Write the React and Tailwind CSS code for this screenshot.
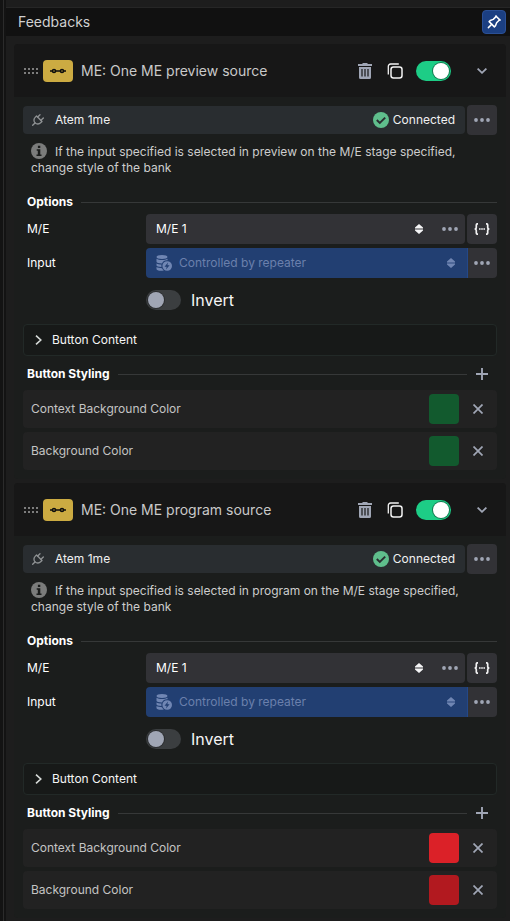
import { useState } from "react";
import { TbPin, TbPlug } from "react-icons/tb";

function DragHandle() {
  return (
    <svg className="h-[6px] w-[15px] shrink-0" viewBox="0 0 15 6" fill="#7d7d7d" aria-hidden="true">
      {[0, 4, 8, 12].map((x) => (
        <g key={x}>
          <rect x={x} y="0" width="2" height="2" />
          <rect x={x} y="4" width="2" height="2" />
        </g>
      ))}
    </svg>
  );
}

function LinkIcon() {
  return (
    <svg className="h-[6px] w-4" viewBox="0 0 16 6" fill="none" stroke="#0d0d0d" strokeWidth="1.6" aria-hidden="true">
      <path d="M0 3h2.500M5.500 3h5M13.500 3H16" />
      <circle cx="4" cy="3" r="1.5" />
      <circle cx="12" cy="3" r="1.5" />
    </svg>
  );
}

function TrashIcon() {
  return (
    <svg className="h-4 w-[14px]" viewBox="0 0 14 16" aria-hidden="true">
      <path fill="#a0a6b5" d="M5 0h4l1 1h4v2H0V1h4zM1 4h12v10.5a1.5 1.5 0 0 1-1.5 1.5h-9A1.5 1.5 0 0 1 1 14.500z" />
      <path stroke="#171717" d="M4 6v7.500M7 6v7.500M10 6v7.500" strokeWidth="1.2" />
    </svg>
  );
}

function CopyIcon() {
  return (
    <svg className="h-4 w-4" viewBox="0 0 16 16" fill="none" stroke="#f4f4f4" strokeWidth="1.5" aria-hidden="true">
      <rect x="4" y="4" width="11" height="11" rx="2.500" />
      <path d="M1.300 11.500V3.300a2.300 2.300 0 0 1 2.300-2.300h8.200" strokeWidth="1.300" />
    </svg>
  );
}

function ChevronDown() {
  return (
    <svg className="h-[6px] w-[10px]" viewBox="0 0 10 6" fill="none" stroke="#a0a6b5" strokeWidth="1.800" aria-hidden="true">
      <path d="M.6.6 5 4.800 9.400.6" />
    </svg>
  );
}

function ChevronRight() {
  return (
    <svg className="h-[10px] w-[7px]" viewBox="0 0 7 10" fill="none" stroke="#d6dad8" strokeWidth="1.600" aria-hidden="true">
      <path d="M1 .6 5.800 5 1 9.400" />
    </svg>
  );
}

function DotsIcon() {
  return (
    <svg className="h-1 w-4" viewBox="0 0 16 4" fill="#a0a6b5" aria-hidden="true">
      <circle cx="2" cy="2" r="1.900" />
      <circle cx="8" cy="2" r="1.900" />
      <circle cx="14" cy="2" r="1.900" />
    </svg>
  );
}

function SortIcon({ dim }) {
  return (
    <svg className="pointer-events-none h-[10px] w-2" viewBox="0 0 8 10" aria-hidden="true">
      <path fill={dim ? "#7086b3" : "#f5f5f6"} d="M4 0 8 3.500V4.400H0V3.500zM4 10 0 6.500V5.600h8v.9z" />
      <path fill={dim ? "#546c9d" : "#98989c"} d="M0 4.400h8v1.200H0z" />
    </svg>
  );
}

function BracesIcon() {
  return (
    <svg className="h-3 w-4" viewBox="0 0 16 12" fill="none" stroke="#f2f2f3" strokeWidth="1.700" aria-hidden="true">
      <path d="M4 .8H3.400C2.600.8 2.300 1.200 2.300 2v2.200C2.300 5.300 1.700 6 .6 6c1.100 0 1.700.7 1.700 1.800V10c0 .8.3 1.200 1.100 1.200H4M12 .8h.6c.8 0 1.100.4 1.100 1.200v2.200c0 1.100.6 1.800 1.700 1.800-1.100 0-1.700.7-1.700 1.800V10c0 .8-.3 1.200-1.100 1.200H12" />
      <path d="M5 6h1.600M7.200 6h1.600M9.400 6H11" strokeWidth="1.300" />
    </svg>
  );
}

function RepeaterIcon() {
  return (
    <svg className="h-4 w-4" viewBox="0 0 16 16" fill="#7086b3" aria-hidden="true">
      <path d="M6 0c3.300 0 5.500.9 5.500 2S9.300 4 6 4 .5 3.100.5 2 2.700 0 6 0zM.5 3.800C1.700 4.700 3.800 5 6 5s4.300-.3 5.500-1.200v1.400A5.500 5.500 0 0 0 6 8.500C3 8.500.5 7.800.5 6.800zM.5 8.500c1.100.8 3 1.100 5 1.100-.2.900-.2 1.600 0 2.400-3-.1-5-.9-5-1.800zM.5 12.100c1.200.8 3.100 1.100 5.500 1.100.4 1 1 1.700 1.800 2.300C4 16.300.5 15.500.5 14z" />
      <path fillRule="evenodd" d="M11.200 6.200a4.800 4.800 0 1 1 0 9.600 4.800 4.800 0 0 1 0-9.600zm.8 1.300-3.500 4.200h2.200l-.7 2.800 3.600-4.200h-2.200z" />
    </svg>
  );
}

function InfoIcon() {
  return (
    <svg className="mr-2 inline-block h-4 w-4 align-[-3px]" viewBox="0 0 16 16" aria-hidden="true">
      <circle cx="8" cy="8" r="8" fill="#7b7c7b" />
      <path fill="#1b1d1c" d="M6.900 2.800h2.400v2.200H6.900zM5.700 6.200h3.600v5.200h1.200v1.600h-5v-1.600h1.300V7.700H5.700z" />
    </svg>
  );
}

function CheckIcon() {
  return (
    <svg className="h-4 w-4" viewBox="0 0 16 16" aria-hidden="true">
      <circle cx="8" cy="8" r="8" fill="#5fbe8c" />
      <path d="m3.800 8 3 3 5.400-5.400" fill="none" stroke="#292d30" strokeWidth="1.900" />
    </svg>
  );
}

function PlusIcon() {
  return (
    <svg className="h-3 w-3" viewBox="0 0 12 12" stroke="#a0a6b5" strokeWidth="1.900" aria-hidden="true">
      <path d="M6 0v12M0 6h12" />
    </svg>
  );
}

function CloseIcon() {
  return (
    <svg className="h-[10px] w-[10px]" viewBox="0 0 10 10" stroke="#a0a6b5" strokeWidth="1.700" aria-hidden="true">
      <path d="m.5.5 9 9M9.500.5l-9 9" />
    </svg>
  );
}

function IconButton({ label, className = "", children }) {
  return (
    <button type="button" aria-label={label} className={`flex shrink-0 items-center justify-center ${className}`}>
      {children}
    </button>
  );
}

function Toggle({ id, label, checked, onChange }) {
  return (
    <input
      id={id}
      type="checkbox"
      role="switch"
      aria-label={label}
      checked={checked}
      onChange={(e) => onChange(e.target.checked)}
      className="flex h-5 w-[35px] shrink-0 cursor-pointer appearance-none items-center rounded-full bg-[#3b3e40] px-[2px] before:h-4 before:w-4 before:rounded-full before:bg-[#a0a6b5] before:ring-1 before:ring-[#2b2d2f] checked:justify-end checked:bg-[#1dcd86] checked:before:ring-[#137a50] checked:before:bg-white"
    />
  );
}

function ColorRow({ name, color }) {
  return (
    <div className="flex h-[38px] items-center rounded bg-[#222222] pl-2 pr-3">
      <span className="flex-1 text-[#c4c4c4]">{name}</span>
      <button type="button" aria-label={`${name} swatch`} className={`h-[30px] w-[30px] rounded ${color}`} />
      <IconButton label={`Remove ${name}`} className="ml-3 h-6 w-[14px]">
        <CloseIcon />
      </IconButton>
    </div>
  );
}

function FeedbackCard({ id, title, target, contextColor, color }) {
  const [enabled, setEnabled] = useState(true);
  const [inverted, setInverted] = useState(false);

  return (
    <section className="rounded bg-[#1b1d1c]">
      <header className="flex h-[53px] items-center rounded-t bg-[#171717] pl-[10px] pr-[19px]">
        <DragHandle />
        <span className="ml-1 flex h-[22px] w-[30px] shrink-0 items-center justify-center rounded bg-[#ccab42]">
          <LinkIcon />
        </span>
        <h2 className="ml-2 min-w-0 flex-1 truncate text-sm text-[#c9c9c9]">{title}</h2>
        <IconButton label="Delete feedback">
          <TrashIcon />
        </IconButton>
        <IconButton label="Duplicate feedback" className="ml-[15px]">
          <CopyIcon />
        </IconButton>
        <div className="ml-[13px] mr-[26px] flex">
          <Toggle id={`${id}-enabled`} label="Enabled" checked={enabled} onChange={setEnabled} />
        </div>
        <IconButton label="Collapse feedback">
          <ChevronDown />
        </IconButton>
      </header>

      <div className="px-[9px] pb-[9px] pt-2">
        <div className="flex items-center gap-[2px]">
          <div className="flex h-7 flex-1 items-center rounded bg-[#292d30] pl-[7px] pr-[10px] text-[#f0f0f0]">
            <TbPlug className="h-4 w-4 shrink-0 text-[#8f9294]" />
            <span className="ml-[9px] flex-1">Atem 1me</span>
            <CheckIcon />
            <span className="ml-1">Connected</span>
          </div>
          <IconButton label="Connection menu" className="h-[30px] w-[30px] rounded bg-[#323236]">
            <DotsIcon />
          </IconButton>
        </div>

        <p className="mt-2 px-2 text-[#cdcdcd]">
          <InfoIcon />
          {`If the input specified is selected in ${target} on the M/E stage specified, change style of the bank`}
        </p>

        <div className="mt-[18px] flex items-center gap-2 pl-1">
          <h3 className="font-bold text-white">Options</h3>
          <span className="h-px flex-1 bg-[#363838]" />
        </div>

        <div className="mt-1 flex items-center text-white">
          <label htmlFor={`${id}-me`} className="w-[123px] shrink-0 pl-1">M/E</label>
          <div className="flex min-w-0 flex-1 gap-[2px]">
            <div className="flex h-[30px] min-w-0 flex-1 items-center rounded bg-[#323236] pr-[7px]">
              <div className="grid h-full flex-1 items-center">
                <select id={`${id}-me`} defaultValue="1" className="col-start-1 row-start-1 h-full w-full appearance-none rounded bg-transparent px-[10px]">
                  <option value="1">M/E 1</option>
                </select>
                <span className="pointer-events-none col-start-1 row-start-1 justify-self-end">
                  <SortIcon />
                </span>
              </div>
              <IconButton label="M/E menu" className="ml-[19px] h-full">
                <DotsIcon />
              </IconButton>
            </div>
            <IconButton label="M/E expression" className="h-[30px] w-[30px] rounded bg-[#323236]">
              <BracesIcon />
            </IconButton>
          </div>
        </div>

        <div className="mt-1 flex items-center text-white">
          <label htmlFor={`${id}-input`} className="w-[123px] shrink-0 pl-1">Input</label>
          <div className="flex h-[30px] min-w-0 flex-1 overflow-hidden rounded">
            <div className="grid flex-1 items-center border-r border-[#234889] bg-[#223f72]">
              <select id={`${id}-input`} disabled className="col-start-1 row-start-1 h-full w-full appearance-none bg-transparent pl-[33px] pr-6 text-[#6b80ac] opacity-100">
                <option>Controlled by repeater</option>
              </select>
              <span className="pointer-events-none col-start-1 row-start-1 flex items-center justify-between pl-[10px] pr-3">
                <RepeaterIcon />
                <SortIcon dim />
              </span>
            </div>
            <IconButton label="Input menu" className="w-[29px] bg-[#323236] pr-px">
              <DotsIcon />
            </IconButton>
          </div>
        </div>

        <div className="mt-3 flex h-5 items-center gap-[10px] pl-[123px]">
          <Toggle id={`${id}-invert`} label="Invert" checked={inverted} onChange={setInverted} />
          <label htmlFor={`${id}-invert`} className="text-base text-[#f5f5f5]">Invert</label>
        </div>

        <button type="button" aria-expanded="false" className="mt-[14px] flex h-8 w-full items-center gap-[10px] rounded border border-[#222927] bg-[#171918] px-[11px] text-left text-[#f5f5f5]">
          <ChevronRight />
          Button Content
        </button>

        <div className="mt-1 flex h-7 items-center gap-2 pl-1">
          <h3 className="font-bold text-white">Button Styling</h3>
          <span className="h-px flex-1 bg-[#363838]" />
          <IconButton label="Add style" className="h-7 w-[22px] pr-[8px]">
            <PlusIcon />
          </IconButton>
        </div>

        <div className="mt-[2px] flex flex-col gap-1">
          <ColorRow name="Context Background Color" color={contextColor} />
          <ColorRow name="Background Color" color={color} />
        </div>
      </div>
    </section>
  );
}

export default function App() {
  return (
    <main className="flex min-h-screen bg-[#131313] font-['Inter',sans-serif] text-xs">
      <div className="w-1 shrink-0 border-r border-[#2b2b2b]" />
      <div className="ml-[2px] min-w-0 flex-1 bg-[#1d1d1d] pt-[7px]">
        <header className="flex h-[29px] items-center justify-between border-t border-[#262626] bg-[#111111] pl-3 pr-1">
          <h1 className="text-sm text-[#d0d0d0]">Feedbacks</h1>
          <IconButton label="Pin panel" className="h-6 w-6 rounded border border-[#2b5095] bg-[#1b3f82] text-white">
            <TbPin className="h-[18px] w-[18px]" />
          </IconButton>
        </header>
        <div className="flex flex-col gap-1 pl-2 pr-1 pt-2">
          <FeedbackCard
            id="preview"
            title="ME: One ME preview source"
            target="preview"
            contextColor="bg-[#125a2e]"
            color="bg-[#125a2e]"
          />
          <FeedbackCard
            id="program"
            title="ME: One ME program source"
            target="program"
            contextColor="bg-[#db2128]"
            color="bg-[#b2191f]"
          />
        </div>
      </div>
    </main>
  );
}
